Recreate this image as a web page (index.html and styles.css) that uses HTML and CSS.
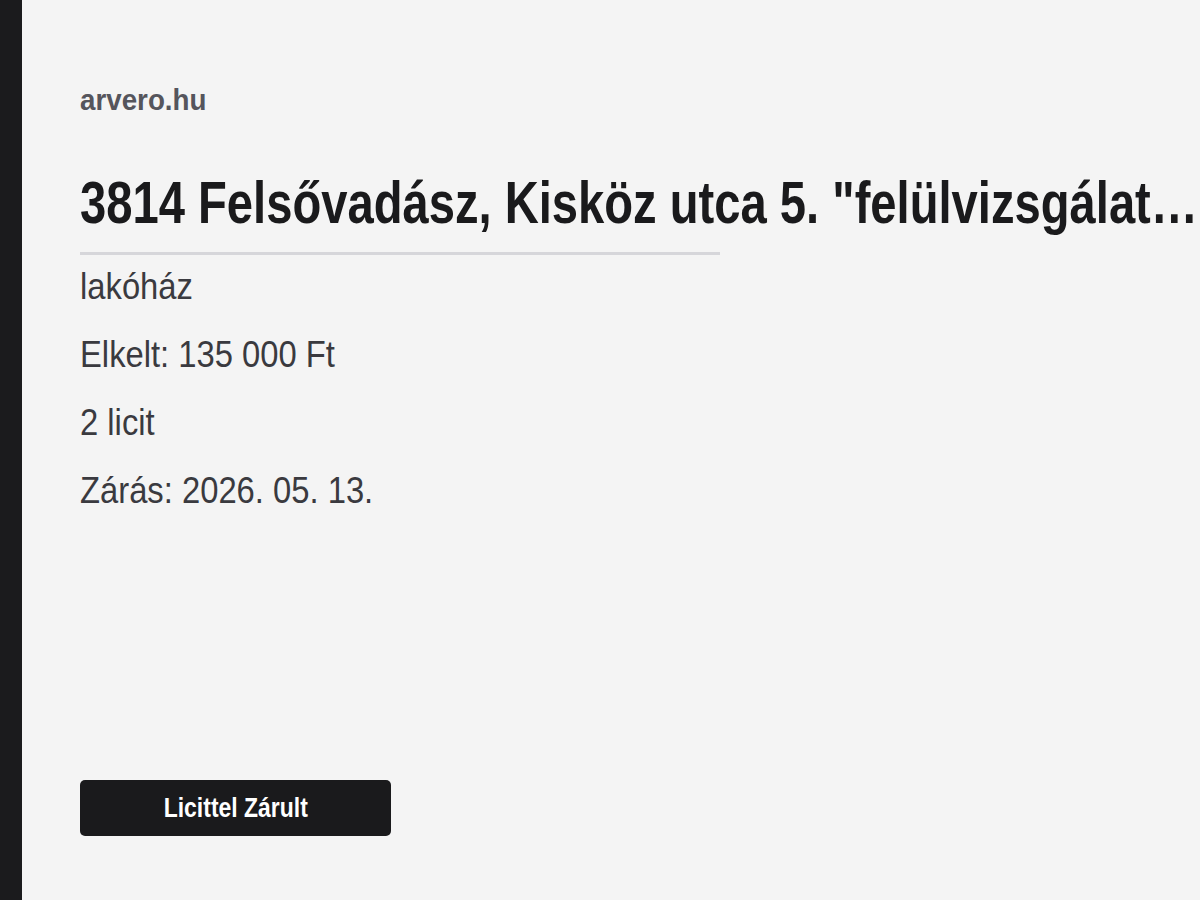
FILE: index.html
```html
<!DOCTYPE html>
<html>
<head>
    <title>arvero.hu - 3814 Felsővadász</title>
    <link rel="stylesheet" href="styles.css">
</head>
<body>
    <div class="page">
        <div class="sidebar"></div>
        <main class="card">
            <div class="source">arvero.hu</div>
            <h1 class="title">3814 Felsővadász, Kisköz utca 5. "felülvizsgálat alatt álló ingatlan"</h1>
            <div class="rule"></div>
            <div class="facts">
                <p>lakóház</p>
                <p>Elkelt: 135 000 Ft</p>
                <p>2 licit</p>
                <p>Zárás: 2026. 05. 13.</p>
            </div>
            <button class="status"><span>Licittel Zárult</span></button>
        </main>
    </div>
</body>
</html>
```

FILE: styles.css
```css
html, body {
    margin: 0;
    height: 100%;
    overflow: hidden;
}
body {
    font-family: "Liberation Sans", Arial, sans-serif;
    background: #f4f4f4;
}
.page {
    display: flex;
    height: 900px;
}
.sidebar {
    width: 22px;
    flex: none;
    background: #1b1b1d;
}
.card {
    flex: 1;
    min-width: 0;
    padding: 78px 0 0 58px;
    display: flex;
    flex-direction: column;
    align-items: flex-start;
}
/* no condensed face installed, so the narrow look comes from scaleX */
.source {
    font-size: 30px;
    font-weight: bold;
    color: #55555c;
    line-height: 44px;
    transform: scaleX(0.925);
    transform-origin: left center;
}
.title {
    margin: 45px 0 0;
    width: 1428px;
    flex: none;
    font-size: 60px;
    line-height: 72px;
    font-weight: bold;
    color: #1a1a1c;
    white-space: nowrap;
    overflow: hidden;
    text-overflow: ellipsis;
    transform: scaleX(0.786);
    transform-origin: left center;
}
.rule {
    width: 640px;
    height: 3px;
    background: #d6d6da;
    margin-top: 13px;
}
.facts {
    margin-top: -2px;
}
.facts p {
    margin: 0;
    font-size: 36px;
    line-height: 68px;
    color: #3a3a3f;
    transform: scaleX(0.91);
    transform-origin: left center;
}
.status {
    margin-top: 255px;
    width: 311px;
    height: 56px;
    border: none;
    border-radius: 5px;
    background: #1a1a1c;
    color: #fff;
    font-family: inherit;
    font-size: 27px;
    font-weight: bold;
}
.status span {
    display: inline-block;
    transform: scaleX(0.85);
}
```
